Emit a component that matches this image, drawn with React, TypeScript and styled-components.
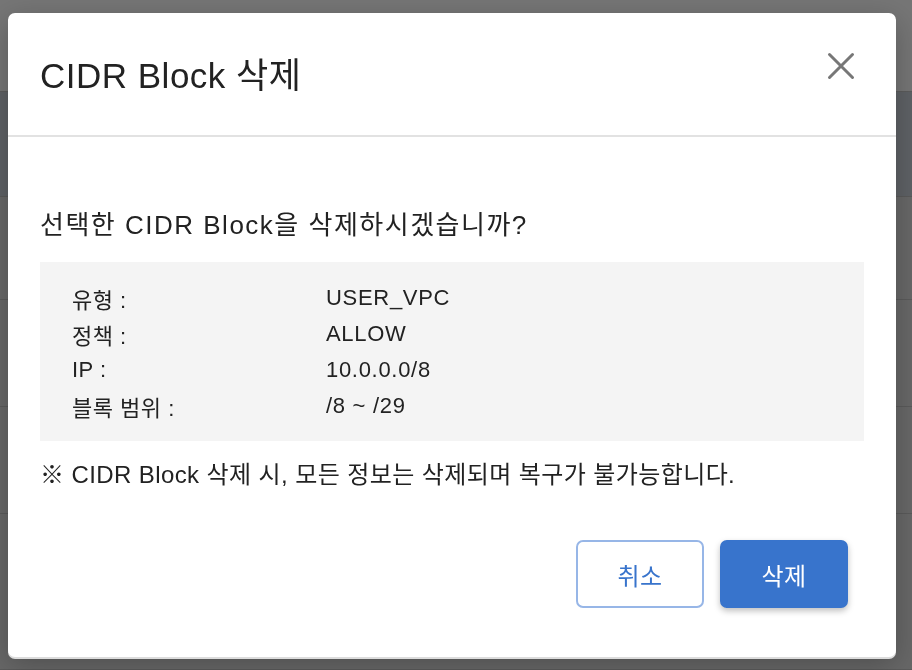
import React from "react";
import styled, { createGlobalStyle } from "styled-components";

const FONT = `"Liberation Sans", "Noto Sans CJK KR", sans-serif`;

const Global = createGlobalStyle`
  html, body { margin: 0; padding: 0; }
  body {
    width: 912px;
    height: 670px;
    overflow: hidden;
    font-family: ${FONT};
    background: #6a6a6a;
  }
`;

const Backdrop = styled.div`
  display: flex;
  flex-direction: column;
  width: 912px;
  height: 670px;
`;

const TopBar = styled.div`
  height: 92px;
  background: #767676;
  border-bottom: 1px solid #5c5c5c;
  box-sizing: border-box;
`;

const HeadBand = styled.div`
  height: 105px;
  background: #5f6266;
  border-bottom: 1px solid #5a5a5a;
  box-sizing: border-box;
`;

const BgRow = styled.div<{ $h: number }>`
  height: ${(p) => p.$h}px;
  background: #686868;
  border-bottom: 1px solid #5b5b5b;
  box-sizing: border-box;
`;

const Overlay = styled.div`
  position: fixed;
  inset: 0;
  display: flex;
  align-items: flex-start;
  justify-content: flex-start;
  padding: 13px 0 0 8px;
`;

const Modal = styled.div`
  width: 888px;
  height: 644px;
  background: #ffffff;
  border-radius: 7px;
  box-shadow: 0 2px 0 #dcdcdc, 0 8px 30px rgba(0, 0, 0, 0.25);
  display: flex;
  flex-direction: column;
  box-sizing: border-box;
`;

const Header = styled.div`
  height: 124px;
  border-bottom: 2px solid #e2e2e2;
  box-sizing: border-box;
  display: flex;
  align-items: center;
  justify-content: space-between;
  padding: 0 38px 3px 32px;
`;

const Title = styled.h2`
  margin: 0;
  font-size: 35px;
  letter-spacing: 0.5px;
  font-weight: 400;
  color: #222222;
`;

const CloseButton = styled.button`
  border: none;
  background: transparent;
  padding: 0;
  width: 34px;
  height: 34px;
  display: flex;
  align-items: center;
  justify-content: center;
  cursor: pointer;
  margin-bottom: 13px;
`;

const Body = styled.div`
  flex: 1;
  display: flex;
  flex-direction: column;
  padding: 70px 32px 0 32px;
`;

const Question = styled.p`
  margin: 0;
  font-size: 26px;
  letter-spacing: 1.5px;
  line-height: 36px;
  color: #222222;
`;

const InfoBox = styled.div`
  margin-top: 19px;
  background: #f4f4f4;
  padding: 18px 32px 17px;
  display: grid;
  grid-template-columns: 254px 1fr;
  grid-auto-rows: 36px;
  align-items: center;
`;

const Label = styled.div`
  font-size: 22px;
  letter-spacing: 0.5px;
  color: #222222;
`;

const Value = styled.div`
  font-size: 22px;
  letter-spacing: 0.7px;
  color: #222222;
`;

const Note = styled.p`
  margin: 16px 0 0;
  font-size: 24px;
  letter-spacing: 0.4px;
  line-height: 36px;
  color: #222222;
`;

const Footer = styled.div`
  display: flex;
  justify-content: flex-end;
  gap: 16px;
  padding: 0 48px 49px;
  margin-top: auto;
`;

const Button = styled.button<{ $primary?: boolean }>`
  width: 128px;
  height: 68px;
  border-radius: 7px;
  font-family: ${FONT};
  font-size: 24px;
  letter-spacing: 0.5px;
  cursor: pointer;
  box-sizing: border-box;
  border: 2px solid ${(p) => (p.$primary ? "#3874cc" : "#97b6e7")};
  background: ${(p) => (p.$primary ? "#3874cc" : "#ffffff")};
  color: ${(p) => (p.$primary ? "#ffffff" : "#3874cc")};
  box-shadow: ${(p) => (p.$primary ? "0 3px 6px rgba(0,0,0,0.25)" : "none")};
`;

const rows: [string, string][] = [
  ["유형 :", "USER_VPC"],
  ["정책 :", "ALLOW"],
  ["IP :", "10.0.0.0/8"],
  ["블록 범위 :", "/8 ~ /29"],
];

export default function App() {
  return (
    <>
      <Global />
      <Backdrop>
        <TopBar />
        <HeadBand />
        <BgRow $h={103} />
        <BgRow $h={107} />
        <BgRow $h={107} />
        <BgRow $h={156} />
      </Backdrop>
      <Overlay>
        <Modal>
          <Header>
            <Title>CIDR Block 삭제</Title>
            <CloseButton aria-label="닫기">
              <svg width="28" height="28" viewBox="0 0 28 28">
                <path
                  d="M2.5 2.5 L25.5 25.5 M25.5 2.5 L2.5 25.5"
                  stroke="#777777"
                  strokeWidth="3"
                  strokeLinecap="round"
                />
              </svg>
            </CloseButton>
          </Header>
          <Body>
            <Question>선택한 CIDR Block을 삭제하시겠습니까?</Question>
            <InfoBox>
              {rows.map(([l, v]) => (
                <React.Fragment key={l}>
                  <Label>{l}</Label>
                  <Value>{v}</Value>
                </React.Fragment>
              ))}
            </InfoBox>
            <Note>※ CIDR Block 삭제 시, 모든 정보는 삭제되며 복구가 불가능합니다.</Note>
          </Body>
          <Footer>
            <Button>취소</Button>
            <Button $primary>삭제</Button>
          </Footer>
        </Modal>
      </Overlay>
    </>
  );
}
